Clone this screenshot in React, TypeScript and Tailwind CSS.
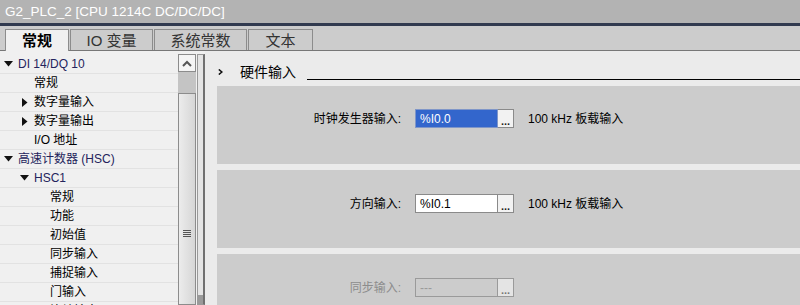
import React from "react";

const font = { fontFamily: '"Liberation Sans", "Noto Sans CJK SC", sans-serif' };

function Down() {
  return (
    <svg width="9" height="6" viewBox="0 0 9 6" className="block">
      <polygon points="0,0 9,0 4.5,5.5" fill="#111" />
    </svg>
  );
}
function Right() {
  return (
    <svg width="6" height="9" viewBox="0 0 6 9" className="block ml-[2px]">
      <polygon points="0,0 5.5,4.5 0,9" fill="#111" />
    </svg>
  );
}

type Row = { level: number; icon?: "down" | "right"; text: string; navy?: boolean };
const rows: Row[] = [
  { level: 0, icon: "down", text: "DI 14/DQ 10", navy: true },
  { level: 1, text: "常规" },
  { level: 1, icon: "right", text: "数字量输入" },
  { level: 1, icon: "right", text: "数字量输出" },
  { level: 1, text: "I/O 地址" },
  { level: 0, icon: "down", text: "高速计数器 (HSC)", navy: true },
  { level: 1, icon: "down", text: "HSC1", navy: true },
  { level: 2, text: "常规" },
  { level: 2, text: "功能" },
  { level: 2, text: "初始值" },
  { level: 2, text: "同步输入" },
  { level: 2, text: "捕捉输入" },
  { level: 2, text: "门输入" },
  { level: 2, text: "比较输出" },
];

function TreeRow({ r }: { r: Row }) {
  const pl = r.level === 0 ? "pl-[4px]" : r.level === 1 ? "pl-[20px]" : "pl-[50px]";
  return (
    <div className={`h-[19px] shrink-0 border-b border-[#e2e2e2] flex items-center ${pl}`}>
      {r.level < 2 && (
        <div className="w-[14px] flex items-center">
          {r.icon === "down" && <Down />}
          {r.icon === "right" && <Right />}
        </div>
      )}
      <span className={`text-[12px] leading-none whitespace-nowrap ${r.navy ? "text-[#24245c]" : "text-black"}`}>
        {r.text}
      </span>
    </div>
  );
}

function Field({
  label,
  value,
  note,
  variant,
}: {
  label: string;
  value: string;
  note?: string;
  variant: "selected" | "normal" | "disabled";
}) {
  const fieldCls =
    variant === "selected"
      ? "bg-[#3366cc] text-white border-[#7f96c8]"
      : variant === "normal"
      ? "bg-white text-black border-[#8a8a8a]"
      : "bg-[#cccccc] text-[#9a9a9a] border-[#9a9a9a]";
  return (
    <div className="flex items-center h-[19px]">
      <div
        className={`w-[186px] text-right text-[12px] leading-none pr-[2px] ${
          variant === "disabled" ? "text-[#8c8c8c]" : "text-black"
        }`}
      >
        {label}
      </div>
      <div className="ml-[12px] flex h-[19px]">
        <div className={`w-[83px] h-[19px] border flex items-center pl-[4px] text-[12px] leading-none ${fieldCls}`}>
          {value}
        </div>
        <div
          className={`w-[16px] h-[19px] border border-l-0 flex items-end justify-center pb-[3px] ${
            variant === "disabled" ? "border-[#9a9a9a] bg-[#e4e4e4]" : "border-[#8a8a8a] bg-[#f2f2f2]"
          }`}
        >
          <span className={`text-[11px] font-bold leading-[6px] ${variant === "disabled" ? "text-[#777]" : "text-[#222]"}`}>
            ...
          </span>
        </div>
      </div>
      {note && <div className="ml-[14px] text-[12px] leading-none text-black whitespace-nowrap">{note}</div>}
    </div>
  );
}

export default function App() {
  return (
    <div className="w-[800px] h-[305px] overflow-hidden flex flex-col bg-[#ebebeb]" style={font}>
      {/* title */}
      <div className="h-[23px] shrink-0 bg-[#b3b3b3] flex items-center pl-[5px] text-white text-[13.5px] leading-none">
        G2_PLC_2 [CPU 1214C DC/DC/DC]
      </div>
      <div className="h-[3px] shrink-0 bg-[#313a4f]" />
      {/* tabs */}
      <div className="h-[25px] shrink-0 bg-[#cccccc] border-b border-[#777] flex items-end pl-[5px]">
        <div className="w-[64px] h-[22px] -mb-[1px] bg-[#f0f0f0] border border-b-0 border-[#8c8c8c] flex items-center justify-center text-[15px] font-bold text-black leading-none">
          常规
        </div>
        <div className="ml-[1px] w-[83px] h-[21px] border border-b-0 border-[#8c8c8c] flex items-center justify-center text-[15px] text-[#333] leading-none">
          IO 变量
        </div>
        <div className="ml-[1px] w-[93px] h-[21px] border border-b-0 border-[#8c8c8c] flex items-center justify-center text-[15px] text-[#333] leading-none">
          系统常数
        </div>
        <div className="ml-[1px] w-[65px] h-[21px] border border-b-0 border-[#8c8c8c] flex items-center justify-center text-[15px] text-[#333] leading-none">
          文本
        </div>
      </div>
      {/* body */}
      <div className="flex-1 flex min-h-0">
        {/* left panel */}
        <div className="w-[205px] shrink-0 flex bg-[#f0f0f0] pt-[3px]">
          <div className="w-[178px] flex flex-col overflow-hidden pt-[1px]">
            {rows.map((r, i) => (
              <TreeRow key={i} r={r} />
            ))}
          </div>
          {/* scrollbar */}
          <div className="w-[18px] flex flex-col">
            <div className="h-[18px] border border-[#8c8c8c] bg-[#f4f4f4] flex items-center justify-center">
              <svg width="10" height="7" viewBox="0 0 10 7">
                <polyline points="1,6 5,2 9,6" fill="none" stroke="#555" strokeWidth="2" />
              </svg>
            </div>
            <div className="h-[21px] bg-[#c4c4c4]" />
            <div className="flex-1 border border-[#8c8c8c] bg-gradient-to-r from-[#ececec] to-[#d6d6d6] flex flex-col items-center pt-[136px]">
              <div className="flex flex-col gap-[1px]">
                <div className="w-[8px] h-[1px] bg-[#555]" />
                <div className="w-[8px] h-[1px] bg-[#555]" />
                <div className="w-[8px] h-[1px] bg-[#555]" />
                <div className="w-[8px] h-[1px] bg-[#555]" />
              </div>
            </div>
          </div>
          {/* splitter */}
          <div className="w-[9px] flex flex-col pl-[1px]">
            <div className="flex-1 border border-[#999] border-r-[#707070] border-r-2 bg-[#e4e4e4] flex flex-col justify-end">
              <div className="h-[9px] bg-[#9a9a9a]" />
            </div>
          </div>
        </div>
        {/* main */}
        <div className="flex-1 flex flex-col pl-[12px] bg-[#ebebeb]">
          <div className="flex h-[20px] mt-[12px] mb-[6px]">
            <div className="w-[23px] flex items-center pl-[1px]">
              <svg width="5" height="6" viewBox="0 0 5 6">
                <polyline points="0.8,0.5 3.8,3 0.8,5.5" fill="none" stroke="#111" strokeWidth="1.6" />
              </svg>
            </div>
            <div className="text-[14px] leading-none flex items-center text-black">硬件输入</div>
            <div className="flex-1 ml-[11px] mt-[16px] h-[1px] bg-black" />
          </div>
          <div className="flex flex-col gap-[6px]">
            <div className="h-[78px] bg-[#cccccc] pt-[23px]">
              <Field label="时钟发生器输入:" value="%I0.0" note="100 kHz 板载输入" variant="selected" />
            </div>
            <div className="h-[78px] bg-[#cccccc] pt-[24px]">
              <Field label="方向输入:" value="%I0.1" note="100 kHz 板载输入" variant="normal" />
            </div>
            <div className="h-[78px] bg-[#cccccc] pt-[24px]">
              <Field label="同步输入:" value="---" variant="disabled" />
            </div>
          </div>
        </div>
      </div>
    </div>
  );
}
